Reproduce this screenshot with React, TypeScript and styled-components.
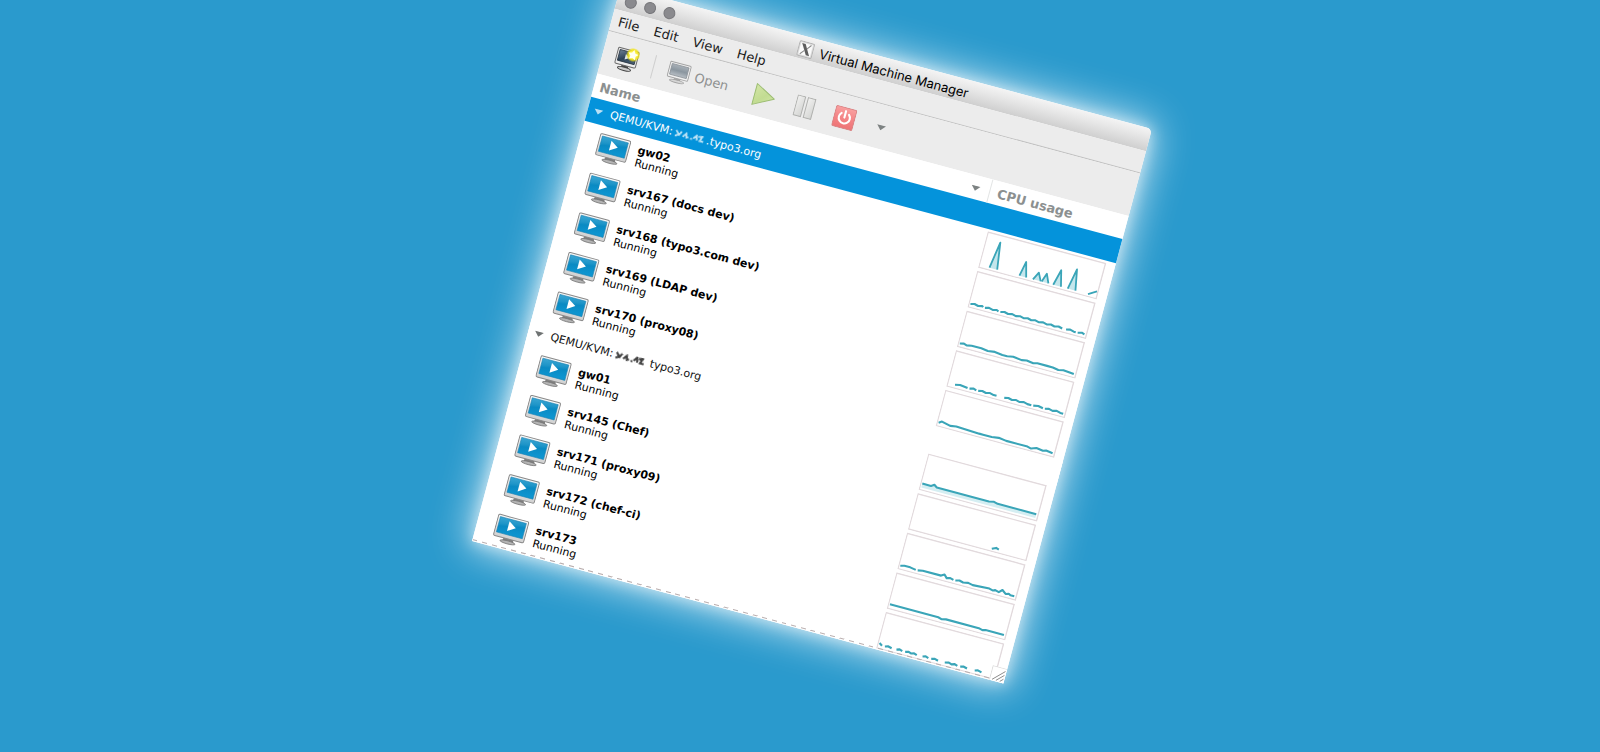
import React from "react";
import styled, { createGlobalStyle } from "styled-components";

const GlobalStyle = createGlobalStyle`
  * { box-sizing: border-box; }
  body {
    margin: 0;
    background: #2a9acd;
    font-family: "DejaVu Sans", Verdana, sans-serif;
    color: #000;
  }
`;

const Stage = styled.main`
  display: flex;
  justify-content: center;
  align-items: flex-start;
  min-height: 100vh;
  padding: 48px 0 0 24px;
  overflow: hidden;
`;

const Window = styled.section`
  position: relative;
  flex: none;
  width: 550px;
  max-width: 100%;
  transform: rotate(15deg);
  border-radius: 5px 5px 0 0;
  background: #fff;
  box-shadow: 0 0 14px 1px rgba(255, 255, 255, 0.5), 0 0 38px 6px rgba(255, 255, 255, 0.7);
`;

const TitleBar = styled.header`
  display: grid;
  grid-template-columns: 1fr auto 1fr;
  align-items: center;
  height: 23px;
  padding: 2px 8px 0 8px;
  border-radius: 5px 5px 0 0;
  background: linear-gradient(#f4f4f4, #e8e8e8 35%, #cfcfcf);
`;

const Lights = styled.div`
  display: flex;
  gap: 8px;
`;

const Light = styled.button`
  width: 12px;
  height: 12px;
  padding: 0;
  border: 1px solid #77777b;
  border-radius: 50%;
  background: #8a8a8e;
`;

const Title = styled.h1`
  display: flex;
  align-items: center;
  gap: 7px;
  margin: 0;
  font: 400 13px/16px Inter, Roboto, sans-serif;
  white-space: nowrap;
`;

const MenuBar = styled.nav`
  display: flex;
  gap: 15px;
  height: 23px;
  padding: 0 7px;
  border-bottom: 1px solid #c2c2c2;
  background: #ececec;
`;

const MenuItem = styled.button`
  padding: 2px 0 0;
  border: 0;
  background: none;
  color: #1c1c1c;
  font: 13px/20px "DejaVu Sans", sans-serif;
`;

const ToolBar = styled.div`
  display: flex;
  align-items: center;
  height: 44px;
  padding: 1px 12px 0;
  background: #ececec;
`;

const ToolButton = styled.button<{ $space?: number }>`
  display: flex;
  align-items: center;
  gap: 5px;
  margin-right: ${(p) => p.$space ?? 0}px;
  padding: 0;
  border: 0;
  background: none;
  color: #8f9191;
  font: 13px/16px "DejaVu Sans", sans-serif;
`;

const Separator = styled.span`
  width: 1px;
  height: 24px;
  margin-right: 14px;
  background: #cfcfcf;
`;

const VmTable = styled.table`
  width: 100%;
  table-layout: fixed;
  border-collapse: collapse;
  background: #fff;
`;

const NameCol = styled.col`
  width: auto;
`;

const CpuCol = styled.col`
  width: 141px;
`;

const HeadCell = styled.th<{ $divided?: boolean }>`
  height: 24px;
  padding: 2px ${(p) => (p.$divided ? 8 : 9)}px 0 ${(p) => (p.$divided ? 8 : 6)}px;
  border-left: ${(p) => (p.$divided ? "1px solid #e3e5e5" : "0")};
  color: #8c9090;
  font-size: 13px;
  line-height: 16px;
  text-align: left;
`;

const HeadLabel = styled.span`
  display: flex;
  align-items: center;
  justify-content: space-between;
`;

const GroupCell = styled.th<{ $selected?: boolean }>`
  height: 25px;
  padding: 0 6px;
  background: ${(p) => (p.$selected ? "#0493db" : "#fff")};
  color: ${(p) => (p.$selected ? "#fff" : "#111")};
  font-size: 11px;
  font-weight: 400;
  line-height: 15px;
  text-align: left;
`;

const GroupLabel = styled.span`
  display: flex;
  align-items: center;
`;

const GroupArrow = styled.svg`
  margin-right: 7px;
`;

const Smudge = styled.svg<{ $wide?: boolean }>`
  margin: 0 ${(p) => (p.$wide ? 5 : 2)}px 0 2px;
`;

const NameCell = styled.td`
  height: 41px;
  padding: 0 0 0 18px;
`;

const CpuCell = styled.td`
  padding: 0 0 0 9px;
`;

const Machine = styled.div`
  display: flex;
  align-items: center;
  gap: 8px;
  font-size: 11px;
  line-height: 13px;
`;

const MachineName = styled.strong`
  display: block;
`;

const Graph = styled.svg`
  display: block;
`;

const DashedEdge = styled.div`
  position: absolute;
  right: 14px;
  bottom: 1px;
  left: 0;
  height: 1px;
  background: repeating-linear-gradient(90deg, #b9aeae 0 5px, transparent 5px 10px);
`;

const Grip = styled.svg`
  position: absolute;
  right: 0;
  bottom: 0;
`;

const Arrow = ({ color = "#7d8282" }: { color?: string }) => (
  <svg width="10" height="6" viewBox="0 0 10 6" aria-hidden="true">
    <path d="M0.5 0.5h9L5 5.5z" fill={color} />
  </svg>
);

const XLogo = () => (
  <svg width="16" height="16" viewBox="0 0 16 16" aria-hidden="true">
    <rect x="0.5" y="0.5" width="15" height="15" rx="1.5" fill="#dcdcdc" stroke="#b4b4b4" />
    <path d="M2 2h12v12h-12z" fill="#fafafa" />
    <path d="M3 2.500h3.600l6.400 11H9.600z" fill="#5d5d5d" />
    <path d="M12.600 2.500L9 7.200M7 9L3.400 13.500" stroke="#888" strokeWidth="1" />
  </svg>
);

const NewVmIcon = () => (
  <svg width="26" height="26" viewBox="0 0 27 27" aria-hidden="true">
    <defs>
      <linearGradient id="newScreen" x1="0" y1="0" x2="1" y2="1">
        <stop offset="0" stopColor="#6f8296" />
        <stop offset="0.5" stopColor="#2f4357" />
        <stop offset="1" stopColor="#4d6378" />
      </linearGradient>
      <radialGradient id="glow">
        <stop offset="0" stopColor="#fff" />
        <stop offset="0.55" stopColor="#fbee3a" />
        <stop offset="0.75" stopColor="#f2e413" stopOpacity="0.8" />
        <stop offset="1" stopColor="#f2e413" stopOpacity="0" />
      </radialGradient>
    </defs>
    <path d="M10 19h6l1 3H9z" fill="#444" />
    <ellipse cx="13" cy="23.500" rx="7" ry="1.700" fill="#c9c9c9" stroke="#444" />
    <rect x="2" y="3" width="22" height="17" rx="1.400" fill="#ececec" stroke="#6a6a6a" />
    <rect x="4" y="5" width="18" height="11.500" fill="url(#newScreen)" stroke="#26323f" strokeWidth="0.8" />
    <path d="M11 8l5 3-5 3z" fill="#dfe5ea" />
    <circle cx="18.500" cy="7" r="7.500" fill="url(#glow)" />
    <path
      d="M18.500 1.800l1.700 3.400 3.800.5-2.800 2.600.7 3.800-3.400-1.800-3.400 1.800.7-3.800-2.800-2.600 3.800-.5z"
      fill="#fffff0"
    />
  </svg>
);

const OpenIcon = () => (
  <svg width="23" height="24" viewBox="0 0 24 24" aria-hidden="true">
    <defs>
      <linearGradient id="openScreen" x1="0" y1="0" x2="0" y2="1">
        <stop offset="0" stopColor="#a9b1b8" />
        <stop offset="0.5" stopColor="#8b969f" />
        <stop offset="1" stopColor="#b7bec4" />
      </linearGradient>
    </defs>
    <path d="M9 17h6l1 3H8z" fill="#a6a6a6" />
    <ellipse cx="12" cy="20.5" rx="7.5" ry="1.4" fill="#d6d6d6" stroke="#a3a3a3" />
    <rect x="1" y="1.5" width="22" height="16" rx="1.2" fill="#f1f1f1" stroke="#a4a4a4" />
    <rect x="3" y="3.5" width="18" height="11.5" fill="url(#openScreen)" stroke="#8b9197" strokeWidth="0.8" />
  </svg>
);

const PlayIcon = () => (
  <svg width="23" height="24" viewBox="0 0 23 24" aria-hidden="true">
    <defs>
      <linearGradient id="play" x1="0" y1="0" x2="1" y2="1">
        <stop offset="0" stopColor="#d3e5a6" />
        <stop offset="0.5" stopColor="#c2dc92" />
        <stop offset="1" stopColor="#d5e8ac" />
      </linearGradient>
    </defs>
    <path d="M1.2 1.2L21.5 12 1.2 22.8z" fill="url(#play)" stroke="#9cbd73" strokeLinejoin="round" />
  </svg>
);

const PauseIcon = () => (
  <svg width="20" height="22" viewBox="0 0 20 22" aria-hidden="true">
    <defs>
      <linearGradient id="pause" x1="0" y1="0" x2="1" y2="1">
        <stop offset="0" stopColor="#f1f1f0" />
        <stop offset="1" stopColor="#d3d4d2" />
      </linearGradient>
    </defs>
    <rect x="0.7" y="0.7" width="7.6" height="20.4" fill="url(#pause)" stroke="#b0b1af" />
    <rect x="11.2" y="0.7" width="7.6" height="20.4" fill="url(#pause)" stroke="#b0b1af" />
  </svg>
);

const PowerIcon = () => (
  <svg width="22" height="22" viewBox="0 0 22 22" aria-hidden="true">
    <defs>
      <linearGradient id="power" x1="0" y1="0" x2="0" y2="1">
        <stop offset="0" stopColor="#f9a0a0" />
        <stop offset="0.5" stopColor="#f48587" />
        <stop offset="1" stopColor="#ee7476" />
      </linearGradient>
    </defs>
    <rect x="0.6" y="0.6" width="20.8" height="20.8" rx="1.5" fill="url(#power)" stroke="#d98485" />
    <path d="M7.2 6.8a5.6 5.6 0 1 0 7.6 0M11 4v6.6" fill="none" stroke="#fff" strokeWidth="2.1" strokeLinecap="round" />
  </svg>
);

const MonitorIcon = () => (
  <svg width="33" height="33" viewBox="0 -3 34 34" aria-hidden="true">
    <defs>
      <linearGradient id="screen" x1="0" y1="0" x2="0.3" y2="1">
        <stop offset="0" stopColor="#3aa6d3" />
        <stop offset="0.4" stopColor="#1f95c8" />
        <stop offset="0.55" stopColor="#0a8ac3" />
        <stop offset="1" stopColor="#0d94cf" />
      </linearGradient>
      <linearGradient id="bezel" x1="0" y1="0" x2="0" y2="1">
        <stop offset="0" stopColor="#fafafa" />
        <stop offset="1" stopColor="#d0d0d0" />
      </linearGradient>
    </defs>
    <path d="M12 23h10l1 3.500H11z" fill="#7f7f7f" />
    <ellipse cx="17" cy="27" rx="8" ry="1.600" fill="#b5b5b5" stroke="#777" strokeWidth="0.8" />
    <rect x="1" y="1" width="32" height="22.500" rx="1.500" fill="url(#bezel)" stroke="#888" />
    <rect x="3.200" y="3.200" width="27.600" height="16.300" fill="url(#screen)" stroke="#1b82b3" strokeWidth="0.6" />
    <path d="M13.500 5.500L21.500 10.700 13.500 15.900z" fill="#fff" />
  </svg>
);

const HiddenHost = ({ dark }: { dark?: boolean }) => (
  <Smudge $wide={dark} width="31" height="13" viewBox="0 0 32 13" aria-hidden="true">
    <defs>
      <filter id={dark ? "softDark" : "softLight"}>
        <feGaussianBlur stdDeviation="0.7" />
      </filter>
    </defs>
    <g
      fill="none"
      stroke={dark ? "#222" : "#fff"}
      strokeWidth={dark ? 2.2 : 1.8}
      opacity={dark ? 0.85 : 0.75}
      filter={`url(#${dark ? "softDark" : "softLight"})`}
    >
      <path d="M1 4l4 4 2-4M4 8l-3 2M9 9l3-4 1 4 2-1M17 9h2M20 8l3-4 1 5M25 5l4-1-2 5 4 0" />
    </g>
  </Smudge>
);

type Load = string[];

const flat = (from: number, to: number, y = 33): string => {
  let d = `M${from} ${y}`;
  let up = true;
  for (let x = from + 4; x < to; x += 4) {
    d += `L${x} ${up ? y - 1 : y}`;
    up = !up;
  }
  return `${d}L${to} ${y}`;
};

const Cpu = ({ lines, filled, peaks }: { lines: Load; filled?: boolean; peaks?: boolean }) => (
  <Graph width="123" height="38" viewBox="0 0 123 38" role="img" aria-label="CPU usage">
    <rect x="0.500" y="1" width="121.500" height="36.500" fill="#fff" stroke="#e2dadd" strokeWidth="1.400" />
    {filled && <path d={`${lines[0]}V35H2z`} fill="#d5eef2" />}
    {lines.map((d) => (
      <path
        key={d}
        d={d}
        fill={peaks ? "#c4e6ec" : "none"}
        stroke="#3aa5b8"
        strokeWidth={peaks ? 1.8 : 2.1}
        strokeLinejoin="round"
      />
    ))}
  </Graph>
);

interface Vm {
  name: string;
  lines: Load;
  filled?: boolean;
  peaks?: boolean;
}

interface Host {
  domain: string;
  selected?: boolean;
  vms: Vm[];
}

const hosts: Host[] = [
  {
    domain: ".typo3.org",
    selected: true,
    vms: [
      {
        name: "gw02",
        peaks: true,
        lines: [
          "M11 35L15 8L19 35",
          "M42 35L45 20L49 35",
          "M56 35L60 27L64 35",
          "M65 35L68 26L72 35",
          "M77 35L81 19L85 35",
          "M92 35L96 14L100 35",
          "M113 35L121 30",
        ],
      },
      {
        name: "srv167 (docs dev)",
        lines: [flat(2, 15, 34), flat(17, 31, 34), flat(33, 97, 34), flat(101, 111, 34), flat(113, 120, 34)],
      },
      {
        name: "srv168 (typo3.com dev)",
        lines: [
          "M2 34L6 33L9 34L14 33L24 33L31 34L38 33L46 34L51 34L57 33L66 34L71 33L78 34L82 33L92 33L98 33L104 34L109 33L120 34",
        ],
      },
      {
        name: "srv169 (LDAP dev)",
        lines: [
          "M8 34L13 33L21 34",
          "M23 34L27 33L30 34",
          flat(32, 51, 34),
          flat(59, 87, 34),
          "M89 34L94 33L99 34",
          flat(101, 120, 34),
        ],
      },
      {
        name: "srv170 (proxy08)",
        lines: ["M2 34L5 32L14 34L20 33L44 34L48 34L57 34L64 33L72 34L94 34L98 35L103 33L110 34L113 33L120 34"],
      },
    ],
  },
  {
    domain: "typo3.org",
    vms: [
      {
        name: "gw01",
        filled: true,
        lines: ["M2 31L11 31L14 29L17 31L71 31L76 30L80 31L120 31"],
      },
      { name: "srv145 (Chef)", lines: ["M86 35L90 33L93 34"] },
      {
        name: "srv171 (proxy09)",
        lines: [
          "M2 34L6 33L12 33L18 34",
          "M20 34L25 33L44 33L47 31L50 34L53 33L57 34",
          "M59 34L63 33L67 34L72 33L77 34L94 33L98 34L100 33L104 34L107 31L111 34L114 33L116 34L120 34",
        ],
      },
      { name: "srv172 (chef-ci)", lines: ["M2 33L52 33L56 34L60 33L94 33L98 34L101 33L120 33"] },
      {
        name: "srv173",
        lines: [
          "M2 32L5 34",
          "M8 34L11 33L15 34",
          "M20 34L23 33L26 34",
          "M29 34L32 33L35 34L38 33L41 34",
          "M47 34L50 33L53 34",
          "M56 34L59 33L63 34",
          "M70 34L74 33L77 34L80 33L83 34",
          "M86 34L89 33L93 34",
          "M101 34L104 33L108 34",
        ],
      },
    ],
  },
];

export default function App() {
  return (
    <>
      <GlobalStyle />
      <Stage>
        <Window aria-label="Virtual Machine Manager">
          <TitleBar>
            <Lights>
              <Light aria-label="Close" />
              <Light aria-label="Minimize" />
              <Light aria-label="Zoom" />
            </Lights>
            <Title>
              <XLogo />
              Virtual Machine Manager
            </Title>
          </TitleBar>
          <MenuBar>
            {["File", "Edit", "View", "Help"].map((label) => (
              <MenuItem key={label}>{label}</MenuItem>
            ))}
          </MenuBar>
          <ToolBar>
            <ToolButton aria-label="New virtual machine" $space={14}>
              <NewVmIcon />
            </ToolButton>
            <Separator />
            <ToolButton $space={26}>
              <OpenIcon />
              Open
            </ToolButton>
            <ToolButton aria-label="Run" $space={20}>
              <PlayIcon />
            </ToolButton>
            <ToolButton aria-label="Pause" $space={20}>
              <PauseIcon />
            </ToolButton>
            <ToolButton aria-label="Shut down" $space={22}>
              <PowerIcon />
            </ToolButton>
            <ToolButton aria-label="Shutdown options">
              <Arrow />
            </ToolButton>
          </ToolBar>
          <VmTable>
            <colgroup>
              <NameCol />
              <CpuCol />
            </colgroup>
            <thead>
              <tr>
                <HeadCell scope="col">
                  <HeadLabel>
                    Name
                    <Arrow />
                  </HeadLabel>
                </HeadCell>
                <HeadCell scope="col" $divided>
                  CPU usage
                </HeadCell>
              </tr>
            </thead>
            {hosts.map((host) => (
              <tbody key={host.domain}>
                <tr>
                  <GroupCell colSpan={2} scope="rowgroup" $selected={host.selected}>
                    <GroupLabel>
                      <GroupArrow width="10" height="6" viewBox="0 0 10 6" aria-hidden="true">
                        <path d="M0.500 0.500h9L5 5.500z" fill={host.selected ? "#b9e0f5" : "#6f7373"} />
                      </GroupArrow>
                      QEMU/KVM:
                      <HiddenHost dark={!host.selected} />
                      {host.domain}
                    </GroupLabel>
                  </GroupCell>
                </tr>
                {host.vms.map((vm) => (
                  <tr key={vm.name}>
                    <NameCell>
                      <Machine>
                        <MonitorIcon />
                        <div>
                          <MachineName>{vm.name}</MachineName>
                          Running
                        </div>
                      </Machine>
                    </NameCell>
                    <CpuCell>
                      <Cpu lines={vm.lines} filled={vm.filled} peaks={vm.peaks} />
                    </CpuCell>
                  </tr>
                ))}
              </tbody>
            ))}
          </VmTable>
          <DashedEdge />
          <Grip width="15" height="15" viewBox="0 0 15 15" aria-hidden="true">
            <path d="M0.500 15V0.500H15V15z" fill="#fff" />
            <path d="M0.500 15V0.500H15" fill="none" stroke="#ddd" />
            <path d="M3 14L14 3M7 14L14 7M11 14L14 11" stroke="#8a8a8a" strokeWidth="0.9" />
          </Grip>
        </Window>
      </Stage>
    </>
  );
}
